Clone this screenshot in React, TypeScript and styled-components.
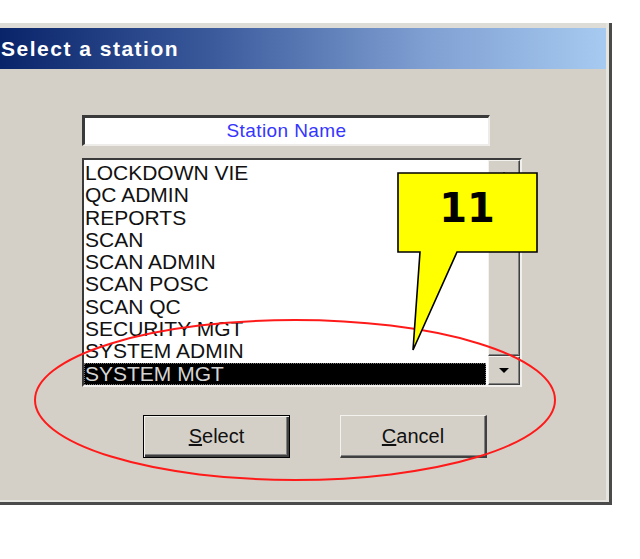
import React from "react";
import styled, { createGlobalStyle } from "styled-components";

const Global = createGlobalStyle`
  html, body { margin: 0; padding: 0; background: #ffffff; }
  body { font-family: "Liberation Sans", Arial, sans-serif; }
`;

const Page = styled.div`
  position: relative;
  width: 640px;
  height: 559px;
  overflow: hidden;
  background: #ffffff;
`;

const Dialog = styled.div`
  margin-top: 23px;
  width: 612px;
  height: 482px;
  box-sizing: border-box;
  background: #d4d0c8;
  border-right: 3px solid #4b4b4b;
  border-bottom: 3px solid #4b4b4b;
  padding: 5px 3px 2px 0;
  display: flex;
  flex-direction: column;
  box-shadow: inset -3px -2px 0 #e6e4de, inset 0 5px 0 #dedcd6;
`;

const TitleBar = styled.div`
  height: 41px;
  flex: none;
  display: flex;
  align-items: center;
  padding-left: 1px;
  background: linear-gradient(to right, #0a246a 0%, #3a5a9c 35%, #7f9fd2 70%, #a6caf0 100%);
  color: #ffffff;
  font-weight: bold;
  font-size: 21px;
  letter-spacing: 1.5px;
`;

const Body = styled.div`
  flex: 1;
  display: flex;
  flex-direction: column;
  padding: 46px 0 0 82px;
`;

const HeaderBox = styled.div`
  width: 408px;
  height: 31px;
  box-sizing: border-box;
  background: #ffffff;
  border-top: 3px solid #3a3a3a;
  border-left: 3px solid #3a3a3a;
  border-bottom: 2px solid #eeece8;
  border-right: 2px solid #eeece8;
  display: flex;
  align-items: center;
  justify-content: center;
  color: #3535ff;
  font-size: 19px;
  letter-spacing: 0.4px;
`;

const ListBox = styled.div`
  margin-top: 12px;
  width: 440px;
  height: 229px;
  box-sizing: border-box;
  background: #ffffff;
  border-top: 2px solid #3a3a3a;
  border-left: 2px solid #3a3a3a;
  border-bottom: 2px solid #f2f0ec;
  border-right: 2px solid #f2f0ec;
  display: flex;
`;

const Items = styled.div`
  flex: 1;
  padding-top: 2px;
  overflow: hidden;
`;

const Item = styled.div<{ $selected?: boolean }>`
  height: 22.3px;
  line-height: 22.3px;
  font-size: 21px;
  padding-left: 1px;
  margin-right: 2px;
  white-space: nowrap;
  color: ${(p) => (p.$selected ? "#d4d4d4" : "#111111")};
  background: ${(p) => (p.$selected ? "#000000" : "transparent")};
  outline: ${(p) => (p.$selected ? "1px dotted #777777" : "none")};
  outline-offset: -1px;
`;

const ScrollBar = styled.div`
  width: 32px;
  flex: none;
  display: flex;
  flex-direction: column;
  background: #e8e6e0;
`;

const Raised = styled.div`
  box-sizing: border-box;
  background: #d4d0c8;
  border-top: 1px solid #f4f2ee;
  border-left: 1px solid #f4f2ee;
  border-bottom: 1px solid #404040;
  border-right: 1px solid #404040;
  box-shadow: inset -1px -1px 0 #808080;
`;

const ScrollButton = styled(Raised)`
  height: 29px;
  flex: none;
  display: flex;
  align-items: center;
  justify-content: center;
`;

const Thumb = styled(Raised)`
  flex: 1;
`;

const Arrow = styled.div<{ $up?: boolean }>`
  width: 0;
  height: 0;
  border-left: 5px solid transparent;
  border-right: 5px solid transparent;
  ${(p) => (p.$up ? "border-bottom: 5px solid #000;" : "border-top: 5px solid #000;")}
`;

const ButtonRow = styled.div`
  margin-top: 28px;
  padding-left: 61px;
  display: flex;
  gap: 50px;
`;

const Button = styled.div<{ $default?: boolean }>`
  width: 147px;
  height: 43px;
  box-sizing: border-box;
  background: #d4d0c8;
  display: flex;
  align-items: center;
  justify-content: center;
  font-size: 20px;
  color: #111111;
  ${(p) =>
    p.$default
      ? `border: 1px solid #000000;
         box-shadow: inset 1px 1px 0 #f4f2ee, inset -2px -2px 0 #404040, inset -3px -3px 0 #808080;`
      : `border-top: 1px solid #f4f2ee;
         border-left: 1px solid #f4f2ee;
         border-bottom: 2px solid #404040;
         border-right: 2px solid #404040;
         box-shadow: inset -1px -1px 0 #808080;`}
`;

const Overlay = styled.svg`
  position: absolute;
  left: 0;
  top: 0;
  pointer-events: none;
`;

const stations = [
  "LOCKDOWN VIE",
  "QC ADMIN",
  "REPORTS",
  "SCAN",
  "SCAN ADMIN",
  "SCAN POSC",
  "SCAN QC",
  "SECURITY MGT",
  "SYSTEM ADMIN",
  "SYSTEM MGT",
];

export default function App() {
  return (
    <>
      <Global />
      <Page>
        <Dialog>
          <TitleBar>Select a station</TitleBar>
          <Body>
            <HeaderBox>Station Name</HeaderBox>
            <ListBox>
              <Items>
                {stations.map((s) => (
                  <Item key={s} $selected={s === "SYSTEM MGT"}>
                    {s}
                  </Item>
                ))}
              </Items>
              <ScrollBar>
                <ScrollButton>
                  <Arrow $up />
                </ScrollButton>
                <Thumb />
                <ScrollButton>
                  <Arrow />
                </ScrollButton>
              </ScrollBar>
            </ListBox>
            <ButtonRow>
              <Button $default>
                <span>
                  <u>S</u>elect
                </span>
              </Button>
              <Button>
                <span>
                  <u>C</u>ancel
                </span>
              </Button>
            </ButtonRow>
          </Body>
        </Dialog>
        <Overlay width="640" height="559" viewBox="0 0 640 559">
          <ellipse cx="295" cy="400" rx="260" ry="80" fill="none" stroke="#ff1a1a" strokeWidth="2" />
          <path
            d="M398,173 H537 V252 H457 L413,350 L420,252 H398 Z"
            fill="#ffff00"
            stroke="#000000"
            strokeWidth="1.6"
            strokeLinejoin="miter"
          />
          <text
            x="467"
            y="222"
            textAnchor="middle"
            fontFamily="'DejaVu Sans', Verdana, sans-serif"
            fontWeight="bold"
            fontSize="40"
            fill="#000000"
          >
            11
          </text>
        </Overlay>
      </Page>
    </>
  );
}
